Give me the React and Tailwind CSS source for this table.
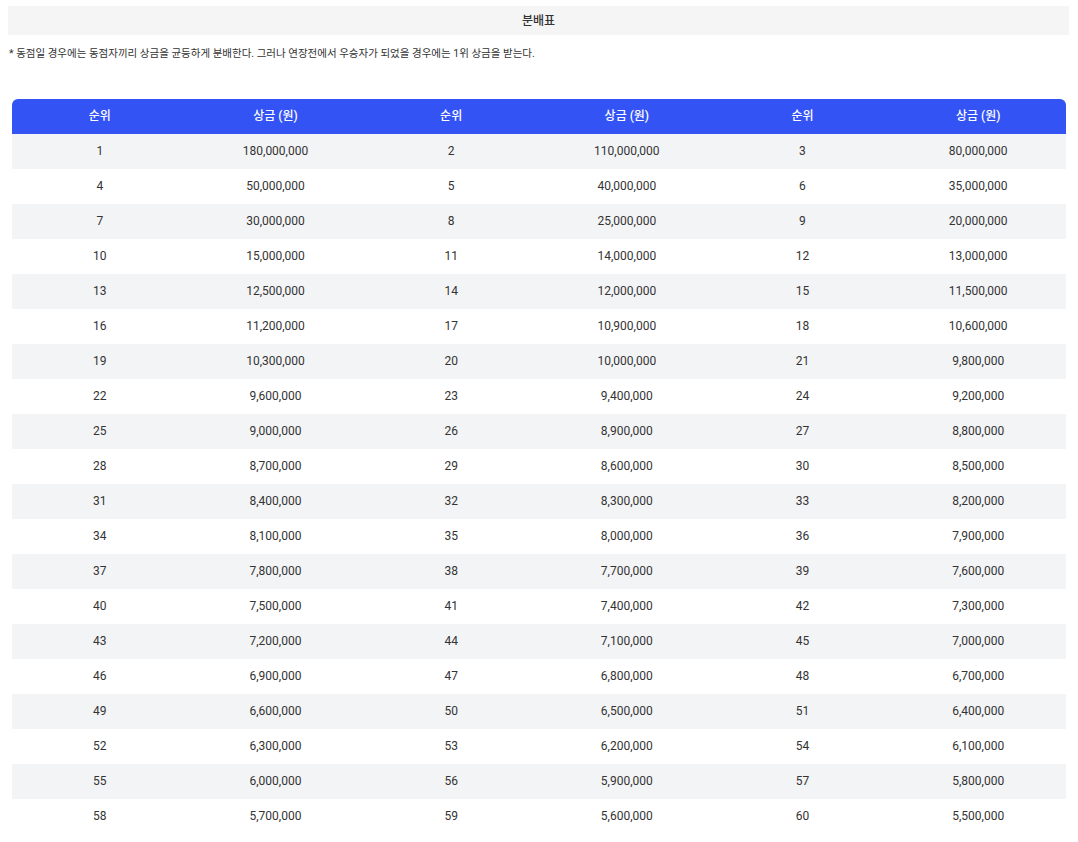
import React from "react";

const prizes = [
  "180,000,000","110,000,000","80,000,000","50,000,000","40,000,000","35,000,000",
  "30,000,000","25,000,000","20,000,000","15,000,000","14,000,000","13,000,000",
  "12,500,000","12,000,000","11,500,000","11,200,000","10,900,000","10,600,000",
  "10,300,000","10,000,000","9,800,000","9,600,000","9,400,000","9,200,000",
  "9,000,000","8,900,000","8,800,000","8,700,000","8,600,000","8,500,000",
  "8,400,000","8,300,000","8,200,000","8,100,000","8,000,000","7,900,000",
  "7,800,000","7,700,000","7,600,000","7,500,000","7,400,000","7,300,000",
  "7,200,000","7,100,000","7,000,000","6,900,000","6,800,000","6,700,000",
  "6,600,000","6,500,000","6,400,000","6,300,000","6,200,000","6,100,000",
  "6,000,000","5,900,000","5,800,000","5,700,000","5,600,000","5,500,000",
];

const rows = [];
for (let i = 0; i < 20; i++) rows.push([0, 1, 2].map((j) => i * 3 + j));

export default function App() {
  return (
    <div
      className="w-[1078px] bg-white pt-[6px] text-[#333]"
      style={{ fontFamily: 'Roboto, "Noto Sans CJK KR", sans-serif' }}
    >
      <div className="mx-[8px] mr-[9px] flex h-[29px] items-center justify-center bg-[#f5f5f5] text-[12px] font-medium text-[#333]">
        분배표
      </div>
      <p className="ml-[9px] mt-[11px] text-[10.5px] leading-[16px] tracking-[0px] text-[#333]">
        * 동점일 경우에는 동점자끼리 상금을 균등하게 분배한다. 그러나 연장전에서 우승자가 되었을 경우에는 1위 상금을 받는다.
      </p>
      <div className="ml-[12px] mt-[37px] w-[1054px]">
        <div className="grid h-[35px] grid-cols-6 items-center rounded-t-[6px] bg-[#3353f5] pb-[2px] text-[12px] font-medium text-white">
          {[0, 1, 2].map((k) => (
            <React.Fragment key={k}>
              <div className="text-center">순위</div>
              <div className="text-center">상금 (원)</div>
            </React.Fragment>
          ))}
        </div>
        {rows.map((r, i) => (
          <div
            key={i}
            className={`grid h-[35px] grid-cols-6 items-center pb-[2px] text-[12px] ${i % 2 === 0 ? "bg-[#f3f4f6]" : "bg-white"}`}
          >
            {r.map((idx) => (
              <React.Fragment key={idx}>
                <div className="text-center">{idx + 1}</div>
                <div className="text-center">{prizes[idx]}</div>
              </React.Fragment>
            ))}
          </div>
        ))}
      </div>
    </div>
  );
}
